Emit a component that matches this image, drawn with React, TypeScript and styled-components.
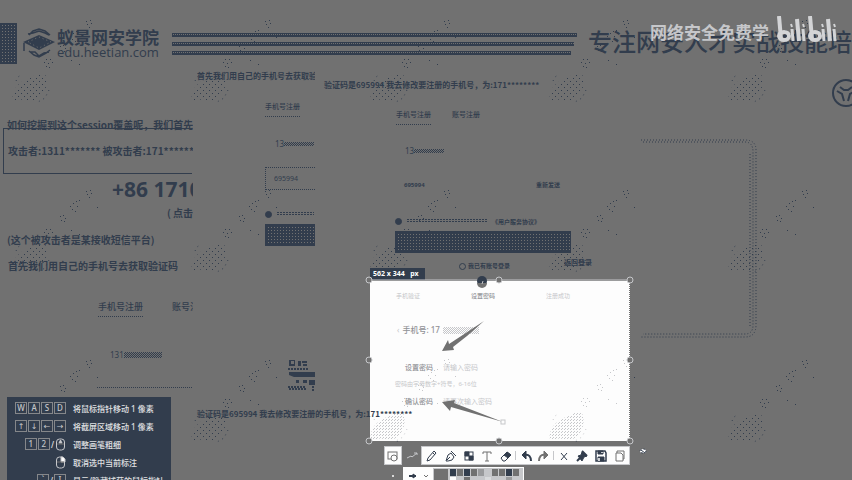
import React from 'react';
import styled, { createGlobalStyle, css } from 'styled-components';

const C = { gray: '#717171', navy: '#323d4d', light: '#c6c7ca', white: '#fdfdfd' };

const GlobalStyle = createGlobalStyle`
  * { box-sizing: border-box; }
  body {
    margin: 0;
    background: ${C.gray};
    color: ${C.navy};
    font-family: "Noto Sans", "Noto Sans CJK SC", sans-serif;
    overflow: hidden;
  }
  button, input { font: inherit; color: inherit; padding: 0; border: 0; background: none; }
  p, h1 { margin: 0; font-weight: inherit; }
`;

const mesh = css`
  background:
    repeating-linear-gradient(90deg, ${C.navy} 0 2px, transparent 2px 3px),
    repeating-linear-gradient(180deg, ${C.navy} 0 2px, ${C.gray} 2px 3px);
`;

const Desktop = styled.main`
  position: relative;
  min-height: 100vh;
  overflow: hidden;
`;
const Backdrop = styled.svg`
  position: absolute;
  inset: 0;
  width: 100%;
  height: 100%;
`;

/* ---------- header ---------- */
const Header = styled.header`
  position: relative;
  display: flex;
  align-items: flex-start;
  padding-top: 23px;
  height: 65px;
`;
const HeaderBlock = styled.div`
  width: 17px;
  height: 41px;
  ${mesh}
`;
const Brand = styled.a`
  display: flex;
  gap: 2px;
  margin: 5px 9px 0 5px;
  color: inherit;
  text-decoration: none;
`;
const BrandText = styled.div`
  width: 106px;
  white-space: nowrap;
`;
const BrandName = styled.div`
  font: 700 17px/17px "Noto Sans CJK SC", sans-serif;
`;
const BrandSite = styled.div`
  font: 400 13px/14px "Open Sans", sans-serif;
`;
const Stripes = styled.div`
  flex: 1;
  display: grid;
  gap: 5px;
  padding-top: 10px;
  margin-right: 11px;
`;
const Stripe = styled.div<{ $inset: number }>`
  height: 4px;
  margin-right: ${(p) => p.$inset}px;
  background:
    repeating-linear-gradient(90deg, ${C.navy} 0 1px, ${C.gray} 1px 2px) 0 1px / 100% 1px no-repeat,
    ${C.navy};
`;
const Slogan = styled.h1`
  width: 264px;
  white-space: nowrap;
  font: 500 24px/36px "Noto Sans CJK SC", sans-serif;
`;

/* ---------- documents ---------- */
const Body = styled.div`
  position: relative;
  display: flex;
  align-items: flex-start;
`;
const Notes = styled.section`
  width: 193px;
  overflow: hidden;
  white-space: nowrap;
`;
const Column = styled.section<{ $width: number; $left: number; $top: number }>`
  width: ${(p) => p.$width}px;
  margin-left: ${(p) => p.$left}px;
  padding-top: ${(p) => p.$top}px;
  white-space: nowrap;
`;
const Clip = styled.div`
  overflow: hidden;
`;
const Sentence = styled.p<{ $top?: number; $left?: number; $size?: number }>`
  position: relative;
  z-index: 1;
  margin: ${(p) => p.$top ?? 0}px 0 0 ${(p) => p.$left ?? 0}px;
  font-family: "Noto Sans CJK SC", sans-serif;
  font-size: ${(p) => p.$size ?? 10}px;
  font-weight: 700;
  line-height: 14px;
`;
const Framed = styled.div`
  margin: -4px 1px 0 3px;
  padding: 15px 0 15px 4px;
  border: 1px solid ${C.navy};
  border-right: 0;
`;
const Phone = styled.p`
  margin: 2px 0 0 112px;
  font: 700 21px/26px "Open Sans", sans-serif;
`;
const Tabs = styled.div<{ $top: number; $left: number; $gap: number }>`
  display: flex;
  gap: ${(p) => p.$gap}px;
  margin: ${(p) => p.$top}px 0 0 ${(p) => p.$left}px;
`;
const Tab = styled.button<{ $size: number; $active?: boolean }>`
  flex: none;
  font-size: ${(p) => p.$size}px;
  font-weight: 500;
  line-height: 18px;
  border-bottom: 1px dotted ${(p) => (p.$active ? C.navy : 'transparent')};
`;
const Value = styled.div<{ $top: number; $left: number }>`
  display: flex;
  align-items: center;
  margin: ${(p) => p.$top}px 0 0 ${(p) => p.$left}px;
  font-size: 8px;
  line-height: 12px;
`;
const Mask = styled.span<{ $width: number; $color?: string; $height?: number }>`
  width: ${(p) => p.$width}px;
  height: ${(p) => p.$height ?? 6}px;
  background: repeating-conic-gradient(${(p) => p.$color ?? C.navy} 0 25%, transparent 0 50%) 0 0 / 2px 2px;
`;
const Rule = styled.div<{ $top: number }>`
  margin: ${(p) => p.$top}px 1px 0 97px;
  border-top: 1px dotted ${C.navy};
`;
const CodeBox = styled.input`
  display: block;
  width: 60px;
  height: 23px;
  margin: 17px 0 0 68px;
  padding-left: 8px;
  border: 1px dotted ${C.navy};
  font-size: 7px;
`;
const Agreement = styled.label<{ $top: number; $left: number }>`
  display: flex;
  align-items: center;
  gap: 4px;
  height: 8px;
  margin: ${(p) => p.$top}px 0 0 ${(p) => p.$left}px;
  font-size: 6px;
  font-weight: 700;
`;
const Tick = styled.input`
  appearance: none;
  flex: none;
  width: 7px;
  height: 7px;
  margin: 0;
  border: 1px solid ${C.navy};
  border-radius: 50%;
  &:checked { background: ${C.navy}; }
`;
const Dots = styled.span<{ $width: number }>`
  width: ${(p) => p.$width}px;
  height: 4px;
  background: repeating-conic-gradient(${C.navy} 0 25%, transparent 0 100%) 0 0 / 3px 2px;
`;
const Submit = styled.button<{ $width: number; $left: number; $top: number }>`
  display: block;
  width: ${(p) => p.$width}px;
  height: 22px;
  margin: ${(p) => p.$top}px 0 0 ${(p) => p.$left}px;
  border: 1px solid ${C.navy};
  ${mesh}
`;
const Links = styled.div`
  display: flex;
  align-items: flex-start;
  justify-content: space-between;
  width: 133px;
  margin: 6px 0 0 135px;
  font-size: 7px;
  font-weight: 700;
  line-height: 8px;
`;
const FooterLabel = styled.label`
  display: flex;
  align-items: center;
  gap: 2px;
  padding-top: 3px;
  font-size: 6px;
`;
const SendRow = styled(Value)`
  justify-content: space-between;
  width: 156px;
  font-size: 6px;
  font-weight: 700;
`;
const QrCard = styled.svg`
  display: block;
  margin: 113px 0 0 91px;
`;
const SideFrame = styled.div`
  width: 116px;
  height: 201px;
  margin: 73px 0 0 17px;
`;
const Emblem = styled.div`
  width: 20px;
  height: 28px;
  margin: 14px 0 0 auto;
  overflow: hidden;
`;

/* ---------- capture overlay ---------- */
const Credit = styled.div`
  position: absolute;
  top: 16px;
  right: 15px;
  display: flex;
  gap: 7px;
  color: ${C.light};
  font: 700 17px/32px "Noto Sans CJK SC", sans-serif;
`;
const Capture = styled.section`
  position: absolute;
  left: 370px;
  top: 281px;
  width: 260px;
`;
const SizeTag = styled.div`
  position: absolute;
  left: 0;
  top: -13px;
  width: 55px;
  height: 12px;
  padding-left: 3px;
  background: ${C.navy};
  color: ${C.white};
  font: 700 7px/12px "Noto Sans", sans-serif;
  white-space: pre;
`;
const Shot = styled.div`
  position: relative;
  height: 160px;
  padding-top: 9px;
  background: ${C.white};
  color: ${C.light};
  border-right: 1px dotted ${C.gray};
  overflow: hidden;
  font-size: 7px;
  line-height: 12px;
`;
const Steps = styled.div`
  position: relative;
  display: flex;
  justify-content: space-between;
  padding: 0 59px 0 26px;
  font-size: 6px;
`;
const Strong = styled.span`
  color: #919296;
  font-weight: 500;
`;
const ShotRow = styled.label<{ $top: number; $left: number; $size?: number }>`
  position: relative;
  display: flex;
  align-items: center;
  gap: 3px;
  margin: ${(p) => p.$top}px 0 0 ${(p) => p.$left}px;
  font-size: ${(p) => p.$size ?? 7}px;
  white-space: nowrap;
`;
const ShotInput = styled.input`
  width: 80px;
  height: 12px;
  margin-left: 7px;
  font-size: 7px;
  &::placeholder { color: ${C.light}; opacity: 1; }
`;
const Marks = styled.svg`
  position: absolute;
  left: -6px;
  top: -6px;
  overflow: visible;
`;
const Tools = styled.div`
  display: flex;
  height: 19px;
  margin: 5px 0 0 14px;
`;
const ToolGroup = styled.div<{ $width?: number }>`
  display: flex;
  align-items: center;
  flex: ${(p) => (p.$width ? 'none' : 1)};
  width: ${(p) => (p.$width ? `${p.$width}px` : 'auto')};
  background: ${C.white};
  border: 1px solid ${C.light};
`;
const Tool = styled.button<{ $active?: boolean }>`
  flex: 1;
  height: 17px;
  display: grid;
  place-items: center;
  ${(p) => p.$active && css`flex: none; width: 19px; height: 19px; color: ${C.light};`}
`;
const Separator = styled.span`
  width: 1px;
  height: 9px;
  background: ${C.light};
`;
const Options = styled.div`
  display: flex;
  width: 121px;
  height: 24px;
  margin: 2px 0 0 33px;
  border: 1px solid ${C.white};
  background: ${C.light};
`;
const ArrowStyle = styled.button`
  display: grid;
  place-items: center;
  width: 29px;
  height: 16px;
  background: ${C.white};
`;
const Current = styled.span`
  width: 14px;
  margin: 1px 1px 0;
  background: ${C.gray};
`;
const Swatches = styled.div`
  display: grid;
  grid-template-columns: repeat(10, 6px);
  grid-auto-rows: 7px;
  gap: 1px;
  padding: 1px 0 0 1px;
`;
const Swatch = styled.button<{ $color: string }>`
  background: ${(p) => p.$color};
`;
const ShortcutPanel = styled.aside`
  position: absolute;
  left: 7px;
  top: 397px;
  width: 164px;
  padding: 2px 0 0 5px;
  background: ${C.navy};
  color: #e0e1e3;
  font-size: 8px;
  font-weight: 500;
`;
const Shortcut = styled.div`
  display: grid;
  grid-template-columns: 54px 1fr;
  gap: 7px;
  align-items: center;
  height: 18px;
  white-space: nowrap;
`;
const Keys = styled.div`
  display: flex;
  justify-content: flex-end;
  align-items: center;
  gap: 1px;
`;
const Key = styled.kbd`
  width: 12px;
  height: 12px;
  border: 1px solid #85878a;
  color: ${C.light};
  font: 500 8px/10px "Noto Sans", "DejaVu Sans", sans-serif;
  text-align: center;
`;

const leafShape = 'M13 101C11 91 18 82 29 78C37 75 40 71 45 74C48 82 47 91 39 98C31 105 22 96 20 101Z';

function Feathers({ id, color, x, y, dense }: { id: string; color: string; x: number; y: number; dense?: boolean }) {
  return (
    <Backdrop aria-hidden="true">
      <defs>
        <pattern id={`${id}-dots`} width={dense ? 3 : 6} height={dense ? 3 : 6} patternUnits="userSpaceOnUse">
          <rect width="1" height="1" fill={color} />
          <rect x={dense ? 1 : 3} y={dense ? 2 : 3} width="1" height="1" fill={color} />
        </pattern>
        <pattern id={`${id}-tile`} x={x} y={y} width="179" height="170" patternUnits="userSpaceOnUse">
          <path d={leafShape} fill={`url(#${id}-dots)`} />
          <path d="M16 81l2-4 3-2M49 90l-4 8-7 4" fill="none" stroke={color} strokeDasharray="1 4" />
          <g fill={color}>
            {[
              [46, 59], [50, 59], [44, 62], [48, 63], [52, 62], [46, 66], [49, 67],
              [60, 46], [63, 45], [65, 48], [61, 50], [64, 51],
              [70, 36], [73, 33], [76, 31], [79, 30], [72, 39], [77, 36], [75, 41],
              [86, 21], [90, 20], [87, 24], [91, 23], [89, 27],
              [71, 60], [79, 64], [97, 37],
            ].map(([dx, dy]) => (
              <rect key={`${dx}-${dy}`} x={dx} y={dy} width="1" height="1" />
            ))}
          </g>
        </pattern>
      </defs>
      <rect width="100%" height="100%" fill={`url(#${id}-tile)`} />
    </Backdrop>
  );
}

const BrandMark = () => (
  <svg width="33" height="31" viewBox="0 0 33 31" fill="none" stroke={C.navy}>
    <path d="M1 14L17 7l16 7-16 8z" fill={C.navy} stroke="none" />
    <path d="M6 14l11-5 12 5-12 6z" stroke={C.gray} strokeDasharray="1 3" />
    <path d="M7 7l4-4 6-2 6 2 5 4M6 6l5-1 6-2 6 2 4 2" strokeWidth="1.5" />
    <path d="M2 15v8M7 23l5 4 5 2 7-4 4-3M8 24l5 0 4 4 5-3 5-1" strokeWidth="1.5" />
  </svg>
);

const BiliLogo = () => (
  <svg width="61" height="32" viewBox="0 0 61 32" role="img" aria-label="bilibili" stroke="#d3d4d6" fill="none">
    {[0, 31].map((x) => (
      <g key={x} transform={`translate(${x} 0)`}>
        <line x1="3" y1="0" x2="5" y2="23" strokeWidth="4" />
        <ellipse cx="8" cy="20" rx="5" ry="4" strokeWidth="4" />
        <line x1="16" y1="13" x2="17" y2="25" strokeWidth="3" />
        <line x1="15" y1="8" x2="16" y2="11" strokeWidth="2" />
        <line x1="21" y1="3" x2="23" y2="25" strokeWidth="4" />
        <line x1="27" y1="13" x2="28" y2="25" strokeWidth="3" />
        <line x1="27" y1="8" x2="28" y2="11" strokeWidth="2" />
      </g>
    ))}
  </svg>
);

const toolIcons: Record<string, React.ReactNode> = {
  画笔: <path d="M2 11l1-3 6-7 2 2-6 7zM8 3l2 2" />,
  荧光笔: <path d="M2 11l2-6 3-2 3 4-2 3-4 1zM7 1l5 5M3 10l3-3" />,
  马赛克: <><rect x="2" y="2" width="8" height="8" /><path d="M2 2h4v4H2zM6 6h4v4H6z" fill={C.navy} /></>,
  文字: <path d="M2 4V2h8v2M6 2v9M4 11h4" stroke={C.gray} />,
  橡皮擦: <><path d="M1 8l6-6 4 3-6 6H3z" /><path d="M4 5l3-3 4 3-3 3z" fill={C.navy} /></>,
  撤销: <><path d="M2 5l4-4v8z" fill={C.navy} /><path d="M5 5c4-1 6 2 6 6" strokeWidth="2" /></>,
  重做: <g stroke={C.gray}><path d="M10 5L6 1v8z" fill={C.gray} /><path d="M7 5C3 4 1 7 1 11" strokeWidth="2" /></g>,
  取消: <path d="M3 3l6 7M9 3l-6 7" />,
  钉住: <><path d="M6 2l5 4-3 1-2 4-4-5 3-1z" fill={C.navy} /><path d="M4 8l-3 3M6 1l5 5" strokeWidth="2" /></>,
  保存: <><path d="M1 1h9l1 2v8H1z" strokeWidth="1.5" /><path d="M3 1h5v3H3zM3 7h6v4H3z" fill={C.navy} /><path d="M4 8v3M7 2v1" stroke={C.white} strokeWidth="1.5" /></>,
  复制: <g stroke={C.gray}><path d="M3 3V1h7v8H9" /><path d="M2 3h5l2 2v6H2z" /></g>,
};

function Icon({ children, stroke = C.navy }: { children: React.ReactNode; stroke?: string }) {
  return <svg width="12" height="12" viewBox="0 0 12 12" fill="none" stroke={stroke}>{children}</svg>;
}

const Mouse = ({ right }: { right?: boolean }) => (
  <svg width="11" height="13" viewBox="0 0 11 13" fill="none" stroke={C.light}>
    <rect x="1.5" y="1" width="8" height="11" rx="3" />
    {right ? <path d="M6 1h2l2 2v3H6z" fill={C.white} /> : <path d="M4 5l1.500-3L7 5z" fill={C.light} />}
    <path d="M2 6h7" stroke={C.gray} />
  </svg>
);

const shortcuts: { keys: React.ReactNode; text: string }[] = [
  { keys: ['W', 'A', 'S', 'D'].map((k) => <Key key={k}>{k}</Key>), text: '将鼠标指针移动 1 像素' },
  { keys: ['↑', '↓', '←', '→'].map((k) => <Key key={k}>{k}</Key>), text: '将截屏区域移动 1 像素' },
  { keys: <><Key>1</Key><Key>2</Key>/<Mouse /></>, text: '调整画笔粗细' },
  { keys: <Mouse right />, text: '取消选中当前标注' },
  { keys: <><Key>`</Key>/<Key>I</Key></>, text: '显示/隐藏捕获的鼠标指针' },
];

const swatches = [
  C.navy, C.gray, C.navy, C.gray, '#999a9c', C.light, C.gray, C.gray, C.navy, C.gray,
  C.white, C.light, C.gray, C.light, C.light, '#d9dadc', C.light, C.light, '#999a9c', C.light,
];

const handles = [[-1, -1], [129, -1], [260, -1], [-1, 79], [260, 79], [-1, 160], [129, 160], [260, 160]];

export default function App() {
  return (
    <Desktop>
      <GlobalStyle />
      <Feathers id="desk" color={C.navy} x={0} y={0} />
      <Header>
        <HeaderBlock />
        <Brand href="#home">
          <BrandMark />
          <BrandText>
            <BrandName>蚁景网安学院</BrandName>
            <BrandSite>edu.heetian.com</BrandSite>
          </BrandText>
        </Brand>
        <Stripes>
          <Stripe $inset={0} />
          <Stripe $inset={3} />
          <Stripe $inset={6} />
        </Stripes>
        <Slogan>专注网安人才实战技能培</Slogan>
      </Header>

      <Body>
        <Notes>
          <Sentence $top={53} $left={7}>如何挖掘到这个session覆盖呢，我们首先</Sentence>
          <Framed>
            <Sentence>攻击者:1311******* 被攻击者:171******</Sentence>
          </Framed>
          <Phone>+86 1710</Phone>
          <Sentence $top={4} $left={167}>( 点击复制</Sentence>
          <Sentence $top={13} $left={7}>(这个被攻击者是某接收短信平台)</Sentence>
          <Sentence $top={12} $left={8}>首先我们用自己的手机号去获取验证码</Sentence>
          <Tabs $top={25} $left={98} $gap={29}>
            <Tab $size={9} $active>手机号注册</Tab>
            <Tab $size={9}>账号注册</Tab>
          </Tabs>
          <Value $top={32} $left={110}>131<Mask $width={38} /></Value>
          <Rule $top={26} />
        </Notes>

        <Column $width={118} $left={4} $top={4}>
          <Clip>
            <Sentence $size={8}>首先我们用自己的手机号去获取验证码</Sentence>
            <Tabs $top={15} $left={68} $gap={20}>
              <Tab $size={7} $active>手机号注册</Tab>
            </Tabs>
            <Value $top={21} $left={78}>13<Mask $width={30} $height={4} /></Value>
            <CodeBox aria-label="验证码" defaultValue="695994" />
            <Agreement $top={20} $left={68}>
              <Tick type="checkbox" defaultChecked />
              <Dots $width={38} />
            </Agreement>
            <Submit type="button" aria-label="注册" $width={50} $left={68} $top={6} />
            <QrCard width="27" height="34" fill={C.navy}>
              <path d="M1 1h6v6H1zM10 2h3v5h-3zM14 2h5v2h-5zM15 5h4v2h-4zM1 13h26v5H6l-5-2zM8 21h3v3H8zM15 21h4v3h-4zM21 21h6v5h-6z" />
              <path d="M3 2h3v3H3z" fill={C.gray} />
              <path d="M0 10h20M0 28h18M1 30h17M25 27v5" stroke={C.navy} strokeWidth="2" strokeDasharray="2 1" />
            </QrCard>
          </Clip>
          <Sentence $top={14} $size={8}>验证码是695994 我去修改要注册的手机号，为:171********</Sentence>
        </Column>

        <Column $width={300} $left={9} $top={13}>
          <Sentence $size={8}>验证码是695994 我去修改要注册的手机号，为:171********</Sentence>
          <Tabs $top={14} $left={72} $gap={21}>
            <Tab $size={7} $active>手机号注册</Tab>
            <Tab $size={7}>账号注册</Tab>
          </Tabs>
          <Value $top={20} $left={81}>13<Mask $width={30} $height={4} /></Value>
          <SendRow $top={22} $left={80}><span>695994</span><span>重新发送</span></SendRow>
          <Agreement $top={26} $left={71}>
            <Tick type="checkbox" defaultChecked />
            <Dots $width={82} />
            <span>《用户服务协议》</span>
          </Agreement>
          <Submit type="button" aria-label="立即注册" $width={176} $left={71} $top={6} />
          <Links>
            <FooterLabel><Tick type="radio" />我已有账号登录</FooterLabel>
            <span>返回登录</span>
          </Links>
        </Column>

        <SideFrame>
          <svg width="116" height="201" fill="none" stroke={C.navy}>
            <path d="M0 2H104Q115 2 115 12V187Q115 199 104 199H0" strokeDasharray="1 2" />
            <path d="M2 4H104Q112 4 112 14V187Q112 196 104 196H2" strokeDasharray="1 2" />
            <path d="M109 16V188" strokeDasharray="1 2" />
          </svg>
        </SideFrame>
        <Emblem>
          <svg width="28" height="28" fill="none" stroke={C.navy} strokeWidth="2">
            <circle cx="14" cy="14" r="13" />
            <path d="M8 8l4 3h4l4-3M5 12l5 3 2 7M23 12l-5 3-2 7" />
          </svg>
        </Emblem>
      </Body>

      <ShortcutPanel>
        {shortcuts.map((s) => (
          <Shortcut key={s.text}>
            <Keys>{s.keys}</Keys>
            <span>{s.text}</span>
          </Shortcut>
        ))}
      </ShortcutPanel>

      <Capture>
        <SizeTag>562 x 344   px</SizeTag>
        <Shot>
          <Feathers id="shot" color={C.light} x={-12} y={58} dense />
          <Steps><span>手机验证</span><Strong>设置密码</Strong><span>注册成功</span></Steps>
          <ShotRow as="div" $top={22} $left={27} $size={8}>
            <span>‹</span><Strong>手机号: 17</Strong><Mask $width={36} $height={7} $color={C.light} />
          </ShotRow>
          <ShotRow $top={26} $left={35}>
            <Strong>设置密码</Strong><ShotInput type="password" placeholder="请输入密码" />
          </ShotRow>
          <ShotRow as="div" $top={4} $left={25} $size={6}>密码由字母数字+符号，6-16位</ShotRow>
          <ShotRow $top={6} $left={35}>
            <Strong>确认密码</Strong><ShotInput type="password" placeholder="请再次输入密码" />
          </ShotRow>
        </Shot>
        <Marks width="272" height="172" viewBox="-6 -6 272 172" aria-hidden="true">
          <path d="M0-1H260" stroke={C.light} />
          <path d="M114 40L79 63 78 59 72 70 84 69 83 66 97 55z" fill={C.gray} />
          <path d="M133 141L84 122 85 119 72 121 80 130 81 126z" fill={C.gray} />
          <rect x="131" y="139" width="4" height="4" stroke={C.light} fill={C.white} />
          <circle cx="112" cy="0" r="5" fill={C.navy} />
          <path d="M107 2a5 5 0 0 0 10 0z" fill={C.gray} />
          <path d="M113 0l-1 3" stroke={C.light} />
          {handles.map(([x, y]) => <circle key={`${x},${y}`} cx={x} cy={y} r="3" fill={C.gray} stroke={C.light} />)}
          <ellipse cx="273" cy="170" rx="3" ry="2" fill={C.white} stroke={C.navy} strokeDasharray="2 2" />
          <path d="M271 169l4 3" stroke={C.navy} />
          <circle cx="23" cy="195" r="1" fill={C.white} />
        </Marks>
        <Tools role="toolbar" aria-label="标注工具">
          <ToolGroup $width={18}>
            <Tool aria-label="形状"><Icon stroke={C.gray}><rect x="1" y="2" width="9" height="7" /><circle cx="7" cy="8" r="3" fill={C.white} /></Icon></Tool>
          </ToolGroup>
          <Tool $active aria-label="箭头"><Icon stroke={C.light}><path d="M1 8l4-2 1 1 5-4M8 3h3v2" /></Icon></Tool>
          <ToolGroup>
            {Object.entries(toolIcons).map(([name, icon]) => (
              <React.Fragment key={name}>
                {(name === '撤销' || name === '取消') && <Separator />}
                <Tool aria-label={name}><Icon>{icon}</Icon></Tool>
              </React.Fragment>
            ))}
          </ToolGroup>
        </Tools>
        <Options>
          <ArrowStyle aria-label="箭头样式">
            <svg width="22" height="6" fill="none" stroke={C.navy}>
              <path d="M1 3h7" strokeWidth="2" /><path d="M5 1l3 2-3 2z" fill={C.navy} /><path d="M16 2l2 2 2-2" stroke={C.gray} />
            </svg>
          </ArrowStyle>
          <Current />
          <Swatches>{swatches.map((c, i) => <Swatch key={i} $color={c} aria-label={`颜色 ${i + 1}`} />)}</Swatches>
        </Options>
      </Capture>

      <Credit><span>网络安全免费学</span><BiliLogo /></Credit>
    </Desktop>
  );
}
